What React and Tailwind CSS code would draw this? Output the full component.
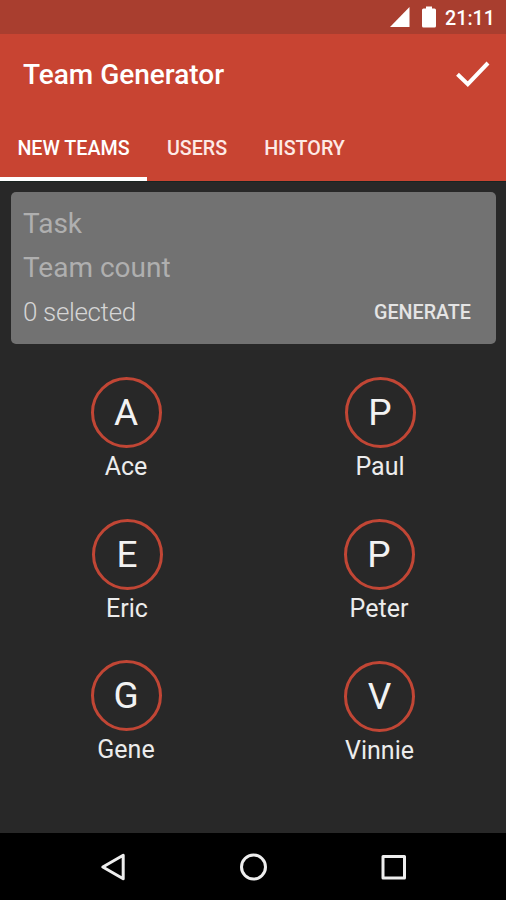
import React from 'react';

const users = [
  { name: 'Ace', offset: '-ml-[1px]' },
  { name: 'Paul', offset: 'ml-[1px]' },
  { name: 'Eric', offset: 'ml-[1px]' },
  { name: 'Peter', offset: '-ml-[1px]' },
  { name: 'Gene', offset: '-ml-[1px]' },
  { name: 'Vinnie', offset: 'pt-px' },
];

function StatusBar() {
  return (
    <div className="flex h-[34px] items-center justify-end bg-[#a93e2f] pr-[11px] text-white">
      <svg className="mr-[12px] h-[22px] w-[20px]" viewBox="0 0 20 22" fill="currentColor">
        <path d="M0 21L19.5 1V21Z" />
      </svg>
      <svg className="mr-[9px] h-[22px] w-[14px]" viewBox="0 0 14 22" fill="currentColor">
        <path d="M4 0.5H10V2.5H12.5Q14 2.5 14 4V20Q14 21.5 12.5 21.5H1.5Q0 21.5 0 20V4Q0 2.5 1.5 2.5H4Z" />
      </svg>
      <span className="pt-[3px] text-[19.7px] leading-none font-medium">21:11</span>
    </div>
  );
}

function AppBar() {
  return (
    <header className="bg-[#c84432] text-white">
      <div className="flex h-[80px] items-center justify-between pr-[16px] pl-[23px]">
        <h1 className="pt-[2px] text-[28px] leading-none font-medium">Team Generator</h1>
        <svg className="h-[28px] w-[34px]" viewBox="0 0 34 28" fill="none" stroke="currentColor" strokeWidth="4">
          <path d="M1.5 14.2L11.8 24.2L32 3" />
        </svg>
      </div>
      <nav className="flex h-[67px] text-[19.7px] font-medium text-[#fdeae6]">
        <div className="flex w-[147px] items-center justify-center border-b-4 border-white pt-[6px] text-white">NEW TEAMS</div>
        <div className="flex w-[100px] items-center justify-center border-b-4 border-transparent pt-[6px]">USERS</div>
        <div className="flex w-[115px] items-center justify-center border-b-4 border-transparent pt-[6px]">HISTORY</div>
      </nav>
    </header>
  );
}

function TaskCard() {
  return (
    <section className="mr-[10px] ml-[11px] mt-[10px] h-[152px] rounded-[5px] bg-[#727272] pr-[25px] pl-[12px] text-[#afafaf]">
      <div className="pt-[10px] text-[28px] leading-[44px]">Task</div>
      <div className="text-[28px] leading-[44px]">Team count</div>
      <div className="flex h-[44px] items-center justify-between">
        <span className="text-[26px] font-light tracking-[-0.35px] text-[#d5d5d5]">0 selected</span>
        <button className="pt-[2px] text-[19.7px] font-medium text-[#e4e4e4]">GENERATE</button>
      </div>
    </section>
  );
}

function User({ name, offset }) {
  return (
    <div className={`flex flex-col items-center ${offset}`}>
      <div className="flex h-[71px] w-[71px] items-center justify-center rounded-full border-[3px] border-[#c14635] text-[37px] leading-none text-[#f2f2f2]">
        {name[0]}
      </div>
      <span className="mt-[4px] text-[25px] leading-[30px] text-[#ececec]">{name}</span>
    </div>
  );
}

function NavigationBar() {
  return (
    <footer className="flex h-[67px] items-center justify-between bg-black px-[100px] text-[#eeeeee]">
      <svg className="h-[28px] w-[28px]" viewBox="0 0 28 28" fill="none" stroke="currentColor" strokeWidth="3" strokeLinejoin="round">
        <path d="M2.8 14L23.2 2.3V25.7Z" />
      </svg>
      <svg className="h-[28px] w-[28px]" viewBox="0 0 28 28" fill="none" stroke="currentColor" strokeWidth="3">
        <circle cx="14.5" cy="14" r="12" />
      </svg>
      <svg className="h-[28px] w-[28px]" viewBox="0 0 28 28" fill="none" stroke="currentColor" strokeWidth="3" strokeLinejoin="round">
        <path d="M5 3.5H26.5V25H5Z" />
      </svg>
    </footer>
  );
}

export default function App() {
  return (
    <div className="flex h-[900px] w-[506px] flex-col overflow-hidden bg-[#282828] font-['Roboto',sans-serif]">
      <StatusBar />
      <AppBar />
      <main className="flex-1 border-t border-[#1a2421]">
        <TaskCard />
        <div className="mt-[33px] grid auto-rows-[141.5px] grid-cols-[253px_253px]">
          {users.map((user) => (
            <User key={user.name} {...user} />
          ))}
        </div>
      </main>
      <NavigationBar />
    </div>
  );
}
